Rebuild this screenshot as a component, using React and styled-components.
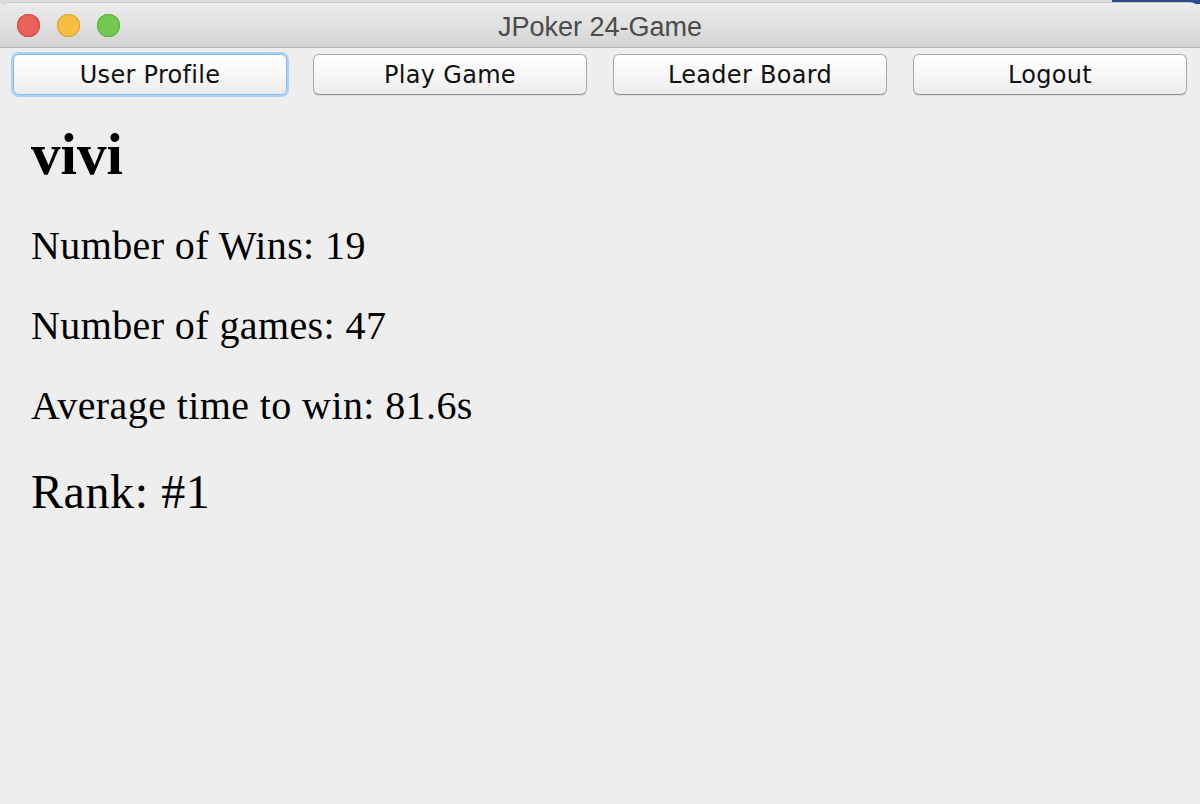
import React from 'react';
import styled, { createGlobalStyle } from 'styled-components';

const GlobalStyle = createGlobalStyle`
  html, body {
    margin: 0;
    padding: 0;
    background: #e2e2e2;
  }
  #root {
    width: 1200px;
    height: 804px;
    overflow: hidden;
  }
`;

const tabs = ['User Profile', 'Play Game', 'Leader Board', 'Logout'];

const stats = [
  'Number of Wins: 19',
  'Number of games: 47',
  'Average time to win: 81.6s',
];

const App = () => {
  return (
    <>
      <GlobalStyle />
      <Desktop>
        <BehindStrip>
          <BehindBlock />
        </BehindStrip>
        <Window>
          <TitleBar>
            <Lights>
              <Light color="#e8625a" edge="#d24c45" />
              <Light color="#f5bf41" edge="#dca530" />
              <Light color="#73c94f" edge="#5cb33c" />
            </Lights>
            <Title>JPoker 24-Game</Title>
          </TitleBar>
          <Toolbar>
            {tabs.map((t, i) => (
              <TabButton key={t} focused={i === 0}>{t}</TabButton>
            ))}
          </Toolbar>
          <Content>
            <Name>vivi</Name>
            {stats.map((s) => (
              <Stat key={s}>{s}</Stat>
            ))}
            <Rank>Rank: #1</Rank>
          </Content>
        </Window>
      </Desktop>
    </>
  );
};

export default App;

const Desktop = styled.div`
  width: 1200px;
  height: 804px;
  display: flex;
  flex-direction: column;
  background: #eeeeee;
`;

const BehindStrip = styled.div`
  height: 4px;
  flex: none;
  background: #dcdcdc;
  display: flex;
  justify-content: flex-end;
`;

const BehindBlock = styled.div`
  width: 88px;
  height: 100%;
  background: #2c4a86;
`;

const Window = styled.div`
  flex: 1;
  display: flex;
  flex-direction: column;
  background: #eeeeee;
  border-radius: 10px 10px 0 0;
  overflow: hidden;
  margin-top: -1px;
  box-shadow: 0 -1px 0 #c8c8c8;
`;

const TitleBar = styled.div`
  height: 45px;
  flex: none;
  box-sizing: border-box;
  padding-top: 5px;
  display: flex;
  align-items: center;
  justify-content: center;
  position: relative;
  background: linear-gradient(to bottom, #ececec, #d4d4d4);
  border-bottom: 1px solid #b4b4b4;
`;

const Lights = styled.div`
  position: absolute;
  left: 17px;
  top: 11px;
  display: flex;
  gap: 17px;
`;

const Light = styled.span`
  width: 23px;
  height: 23px;
  border-radius: 50%;
  background: ${(p) => p.color};
  box-shadow: inset 0 0 0 1px ${(p) => p.edge};
`;

const Title = styled.div`
  font-family: 'Liberation Sans', Arial, sans-serif;
  font-size: 27px;
  color: #4b4b4b;
`;

const Toolbar = styled.div`
  display: grid;
  grid-template-columns: repeat(4, 274px);
  gap: 26px;
  padding: 6px 13px 0;
`;

const TabButton = styled.button`
  height: 41px;
  box-sizing: border-box;
  font-family: 'DejaVu Sans', Verdana, sans-serif;
  font-size: 24px;
  letter-spacing: 0.3px;
  color: #111;
  background: linear-gradient(to bottom, #ffffff 0%, #f7f7f7 50%, #ececec 100%);
  border: 1px solid ${(p) => (p.focused ? '#86bdee' : '#a8a8a8')};
  border-bottom-color: ${(p) => (p.focused ? '#86bdee' : '#8e8e8e')};
  border-radius: 6px;
  box-shadow: ${(p) => (p.focused ? '0 0 0 2px #a9d1f5' : '0 1px 0 #dcdcdc')};
  padding: 0;
  cursor: pointer;
`;

const Content = styled.div`
  padding: 7px 31px 0;
  display: flex;
  flex-direction: column;
  color: #000;
  font-family: 'Liberation Serif', 'Times New Roman', serif;
`;

const Name = styled.h1`
  margin: 0;
  font-size: 59px;
  font-weight: bold;
  line-height: 104px;
`;

const Stat = styled.p`
  margin: 0;
  font-size: 40px;
  letter-spacing: 0.4px;
  line-height: 80px;
`;

const Rank = styled.p`
  margin: 0;
  font-size: 48px;
  letter-spacing: 0.6px;
  line-height: 92px;
`;
